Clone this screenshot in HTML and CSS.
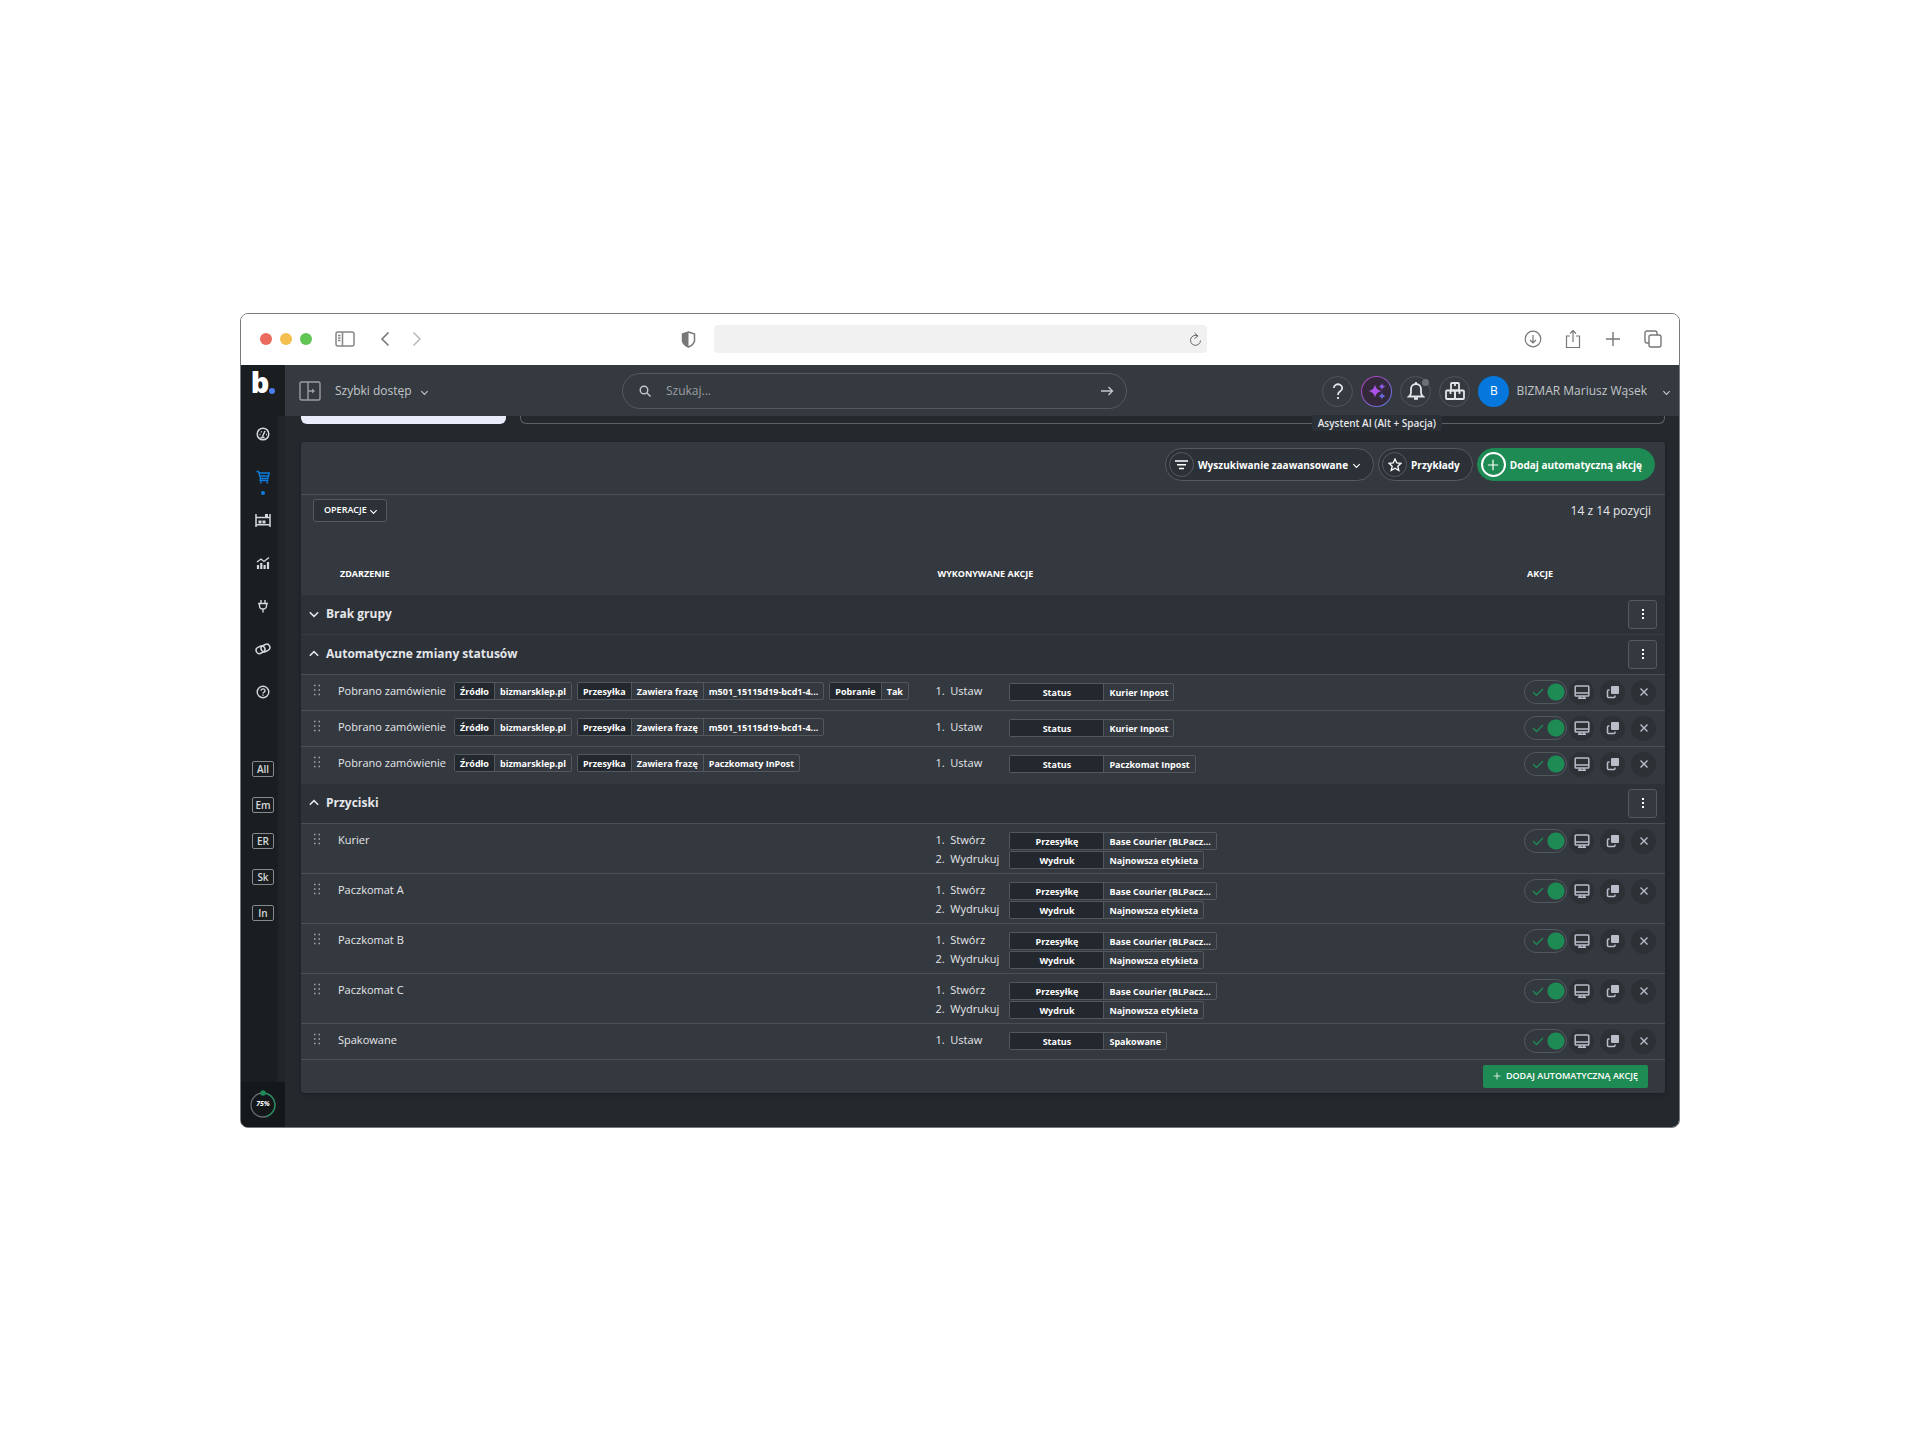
FILE: index.html
```html
<!DOCTYPE html>
<html lang="pl">
<head>
    <meta charset="UTF-8">
    <meta name="viewport" content="width=device-width, initial-scale=1.0">
    <title>Automatyczne akcje</title>
    <link rel="stylesheet" href="styles.css">
</head>
<body>
    <!-- Shared icons -->
    <svg class="sprite" aria-hidden="true">
        <symbol id="chevron" viewBox="0 0 10 10"><path d="M1.5 3.5 5 7l3.500-3.500" fill="none" stroke="currentColor" stroke-width="1.300"/></symbol>
        <symbol id="check" viewBox="0 0 12 10"><path d="M1 5l3.500 3.500L11 2" fill="none" stroke="currentColor" stroke-width="1.300"/></symbol>
        <symbol id="monitor" viewBox="0 0 16 16"><path d="M2 2h12a.8.8 0 0 1 .8.8v8.400a.8.8 0 0 1-.8.8H2a.8.8 0 0 1-.8-.8V2.800A.8.8 0 0 1 2 2zM1 9h14M6 12v2m4-2v2M4 14.300h8" fill="none" stroke="currentColor" stroke-width="1.500"/></symbol>
        <symbol id="copy" viewBox="0 0 14 14"><rect x="5" y="1" width="8" height="8" rx="1" fill="currentColor"/><path d="M3.500 5H2.500a1 1 0 0 0-1 1v5.500a1 1 0 0 0 1 1H8a1 1 0 0 0 1-1v-1" fill="none" stroke="currentColor" stroke-width="1.500"/></symbol>
        <symbol id="cross" viewBox="0 0 10 10"><path d="M1.500 1.500l7 7m0-7l-7 7" stroke="currentColor" stroke-width="1.400"/></symbol>
        <symbol id="plus" viewBox="0 0 14 14"><path d="M7 1v12M1 7h12" stroke="currentColor" stroke-width="1.400"/></symbol>
        <symbol id="dots" viewBox="0 0 4 12"><path d="M2 1v2m0 2v2m0 2v2" stroke="currentColor" stroke-width="2"/></symbol>
        <symbol id="grip" viewBox="0 0 8 12"><path d="M1 1.500h1.500M5.500 1.500H7M1 6h1.500M5.500 6H7M1 10.500h1.500M5.500 10.500H7" stroke="currentColor" stroke-width="1.500"/></symbol>
    </svg>

    <div class="window">
        <header class="chrome">
            <div class="chrome-left">
                <div class="lights"><i class="red"></i><i class="yellow"></i><i class="green"></i></div>
                <svg class="panel-icon" width="20" height="16" viewBox="0 0 20 16" fill="none" stroke="#858585" stroke-width="1.500"><rect x="1" y="1" width="18" height="14" rx="2"/><path d="M7.500 1v14M3 4.500h2.500M3 7h2.500M3 9.500h2.500"/></svg>
                <svg class="back" width="10" height="16" viewBox="0 0 10 16" fill="none" stroke="#777" stroke-width="1.600"><path d="M8.500 1.500 2 8l6.500 6.500"/></svg>
                <svg width="10" height="16" viewBox="0 0 10 16" fill="none" stroke="#bbb" stroke-width="1.600"><path d="M1.500 1.500 8 8l-6.500 6.500"/></svg>
                <svg class="shield" width="15" height="17" viewBox="0 0 15 17"><path d="M7.500 1 13.500 3v7q-1 4-6 6-5-2-6-6V3z" fill="#fff" stroke="#777" stroke-width="1.500"/><path d="M7.500 1 1.500 3v7q1 4 6 6z" fill="#777"/></svg>
            </div>
            <div class="address">
                <svg width="13" height="15" viewBox="0 0 13 15" fill="none" stroke="#666" stroke-width="1"><path d="M9 4a5 5 0 1 0 2.500 4.500M5.500 1 9 4 5.500 6.500"/></svg>
            </div>
            <div class="chrome-right">
                <svg width="18" height="18" viewBox="0 0 18 18" fill="none" stroke="#777" stroke-width="1.200"><circle cx="9" cy="9" r="7.800"/><path d="M9 5v8M6 10l3 3 3-3"/></svg>
                <svg width="18" height="20" viewBox="0 0 18 20" fill="none" stroke="#777" stroke-width="1.200"><path d="M6 7H2.500v11.500h13V7H12M9 13V1.500M6 4.500l3-3 3 3"/></svg>
                <svg width="18" height="18" viewBox="0 0 18 18" fill="none" stroke="#777" stroke-width="1.400"><path d="M9 2v14M2 9h14"/></svg>
                <svg width="18" height="18" viewBox="0 0 18 18" fill="none" stroke="#777" stroke-width="1.400"><rect x="5" y="5" width="12" height="12" rx="2"/><path d="M5 13H3a2 2 0 0 1-2-2V3a2 2 0 0 1 2-2h8a2 2 0 0 1 2 2v2"/></svg>
            </div>
        </header>

        <div class="app">
            <aside class="sidebar">
                <a class="logo" href="#">b<i></i></a>
                <nav class="side-nav">
                    <a href="#" aria-label="Pulpit"><svg width="14" height="14" viewBox="0 0 14 14" fill="none" stroke="currentColor" stroke-width="1.500"><circle cx="7" cy="7" r="5.800"/><path d="M6.500 9.500 9 4M4.500 10.500h4M3.500 7.500h1M5 4.500l.8.8M10 7.500h1"/></svg></a>
                    <a href="#" class="active" aria-label="Zamówienia"><svg width="14" height="14" viewBox="0 0 14 14" fill="none" stroke="currentColor" stroke-width="1.300"><path d="M.5 1.500h2l2 7h7.500l1.300-5.500H3M4 6h8.500M4.500 8.500 4 10.500h8.500"/><path d="M4 12.500h1.500M10.500 12.500H12" stroke-width="2"/></svg></a>
                    <a href="#" aria-label="Magazyn"><svg width="16" height="14" viewBox="0 0 16 14" fill="none" stroke="currentColor" stroke-width="1.500"><path d="M1 1v13M15 1v13M1 4.500h14M1 11.800h14"/><path d="M10 2.500h3M3.500 9h3M7.500 9h3" stroke-width="3"/></svg></a>
                    <a href="#" aria-label="Statystyki"><svg width="14" height="14" viewBox="0 0 14 14" fill="none" stroke="currentColor" stroke-width="1.300"><path d="M1 6l4-3 3 2.500L13 1.500"/><path d="M2 9v4M5.300 7v6M8.600 9v4M12 6v7" stroke-width="2.200"/></svg></a>
                    <a href="#" aria-label="Integracje"><svg width="12" height="14" viewBox="0 0 12 14" fill="none" stroke="currentColor" stroke-width="1.400"><path d="M4 1v3M8 1v3M1 4.500h10M2.500 4.500V7a3.500 3 0 0 0 7 0V4.500M6 10v3.500"/></svg></a>
                    <a href="#" aria-label="Linki"><svg width="16" height="14" viewBox="0 0 16 14" fill="none" stroke="currentColor" stroke-width="1.500"><rect x="1" y="4.500" width="9" height="6.500" rx="3.200" transform="rotate(-25 5.500 7.700)"/><rect x="6" y="2.700" width="9" height="6.500" rx="3.200" transform="rotate(-25 10.500 6)"/></svg></a>
                    <a href="#" aria-label="Pomoc"><svg width="14" height="14" viewBox="0 0 14 14" fill="none" stroke="currentColor" stroke-width="1.400"><circle cx="7" cy="7" r="5.800"/><path d="M5 5.800a2 1.800 0 1 1 2.800 1.500Q7 7.600 7 8.500M7 9.500v1.300"/></svg></a>
                </nav>
                <nav class="shortcuts">
                    <a href="#">All</a>
                    <a href="#">Em</a>
                    <a href="#">ER</a>
                    <a href="#">Sk</a>
                    <a href="#">In</a>
                </nav>
                <div class="progress">
                    <svg width="28" height="30" viewBox="0 0 28 30" fill="none" stroke-width="1.300"><circle cx="14" cy="16" r="12" stroke="#666b6f"/><path d="M14 4a12 12 0 0 1 3 23.600" stroke="#1f8b58"/><circle cx="14" cy="4" r="2.700" fill="#1f8b58"/></svg>
                    <span>75%</span>
                </div>
            </aside>

            <div class="content">
                <div class="topbar">
                    <div class="quick">
                        <svg width="22" height="20" viewBox="0 0 22 20" fill="none" stroke="#9a9fa5" stroke-width="1.400"><rect x="1" y="1" width="20" height="18" rx="1.500"/><path d="M9 1v18M9 10h6"/><path d="M13 7.500 16 10l-3 2.500z" fill="#9a9fa5" stroke="none"/></svg>
                        <button class="quick-button">Szybki dostęp <svg class="chev"><use href="#chevron"/></svg></button>
                    </div>
                    <form class="search">
                        <svg width="12" height="12" viewBox="0 0 12 12" fill="none" stroke="currentColor" stroke-width="1.400"><circle cx="5" cy="5" r="3.800"/><path d="M7.800 7.800 11.500 11.500"/></svg>
                        <input type="text" placeholder="Szukaj..." aria-label="Szukaj">
                        <svg width="14" height="10" viewBox="0 0 14 10" fill="none" stroke="currentColor" stroke-width="1.400"><path d="M1 5h11.500M8.500 1l4 4-4 4"/></svg>
                    </form>
                    <div class="user-bar">
                        <button class="round" aria-label="Pomoc"><svg width="12" height="17" viewBox="0 0 12 17" fill="none" stroke="currentColor" stroke-width="1.800"><path d="M1.800 5a4.200 3.800 0 1 1 6.400 3.300Q6 9.500 6 12M6 14v2"/></svg></button>
                        <button class="round ai" aria-label="Asystent AI">
                            <svg width="18" height="18" viewBox="0 0 18 18"><path d="M7 2.500Q8 8 13.500 9 8 10 7 15.500 6 10 .5 9 6 8 7 2.500z" fill="#ad52e8"/><path d="M14 1q.5 3 3.500 3.500Q14.500 5 14 8q-.5-3-3.500-3.500Q13.500 4 14 1z" fill="#8e5bea"/><path d="M14 10.500q.5 3 3.500 3.500-3 .5-3.500 3.500-.5-3-3.500-3.500 3-.5 3.500-3.500z" fill="#6b6bea"/></svg>
                            <span class="tooltip">Asystent AI (Alt + Spacja)</span>
                        </button>
                        <button class="round bell" aria-label="Powiadomienia"><svg width="18" height="20" viewBox="0 0 18 20" fill="none" stroke="currentColor" stroke-width="1.800"><path d="M2 15.500q2-1.500 2-4V8a5 5 0 0 1 10 0v3.500q0 2.500 2 4zM9 1v2"/><path d="M7 17.500h4" stroke-width="2.400"/></svg><i></i></button>
                        <button class="round" aria-label="Magazyn"><svg width="20" height="18" viewBox="0 0 20 18" fill="none" stroke="currentColor" stroke-width="1.800"><rect x="6" y="1" width="8" height="7.500" rx="1"/><rect x="1" y="8.500" width="9" height="8.500" rx="1"/><rect x="10" y="8.500" width="9" height="8.500" rx="1"/><path d="M10 1v3M5.500 9v3M14.500 9v3"/></svg></button>
                        <span class="avatar">B</span>
                        <button class="user-name">BIZMAR Mariusz Wąsek <svg class="chev"><use href="#chevron"/></svg></button>
                    </div>
                </div>

                <main>
                    <div class="cards">
                        <div class="card-light"></div>
                        <div class="card-outline"></div>
                    </div>

                    <section class="panel">
                        <div class="panel-head">
                            <button class="pill"><span class="pill-icon"><svg width="13" height="10" viewBox="0 0 13 10" stroke="currentColor" stroke-width="1.600"><path d="M0 1h13M2 4.700h9M4 8.500h5"/></svg></span>Wyszukiwanie zaawansowane <svg class="chev"><use href="#chevron"/></svg></button>
                            <button class="pill"><span class="pill-icon"><svg width="14" height="14" viewBox="0 0 14 14" fill="none" stroke="currentColor" stroke-width="1.300"><path d="M7 1l1.800 3.900 4.200.4-3.200 2.900 1 4.300L7 10.200l-3.800 2.300 1-4.300L1 5.300l4.200-.4z"/></svg></span>Przykłady</button>
                            <button class="pill primary"><span class="pill-icon"><svg width="12" height="12"><use href="#plus"/></svg></span>Dodaj automatyczną akcję</button>
                        </div>
                        <div class="toolbar">
                            <button class="operations">OPERACJE <svg class="chev"><use href="#chevron"/></svg></button>
                            <span class="count">14 z 14 pozycji</span>
                        </div>

                        <table class="rules">
                            <colgroup><col class="col-event"><col><col class="col-actions"></colgroup>
                            <thead>
                                <tr><th class="th-event">ZDARZENIE</th><th>WYKONYWANE AKCJE</th><th>AKCJE</th></tr>
                            </thead>
                            <tbody>
                                <tr class="group-row">
                                    <th colspan="2"><button class="fold"><svg class="chev"><use href="#chevron"/></svg>Brak grupy</button></th>
                                    <td><button class="more" aria-label="Więcej"><svg width="4" height="12"><use href="#dots"/></svg></button></td>
                                </tr>
                            </tbody>
                            <tbody>
                                <tr class="group-row">
                                    <th colspan="2"><button class="fold open"><svg class="chev"><use href="#chevron"/></svg>Automatyczne zmiany statusów</button></th>
                                    <td><button class="more" aria-label="Więcej"><svg width="4" height="12"><use href="#dots"/></svg></button></td>
                                </tr>
                                <tr>
                                    <td><div class="event"><svg class="grip"><use href="#grip"/></svg><span class="event-name">Pobrano zamówienie</span>
                                        <span class="tag"><b>Źródło</b><span>bizmarsklep.pl</span></span>
                                        <span class="tag"><b>Przesyłka</b><span>Zawiera frazę</span><span>m501_15115d19-bcd1-4...</span></span>
                                        <span class="tag"><b>Pobranie</b><span>Tak</span></span></div></td>
                                    <td><ol class="steps"><li><span>1.&nbsp; Ustaw</span><span class="tag"><b>Status</b><span>Kurier Inpost</span></span></li></ol></td>
                                    <td><div class="row-actions"><label class="toggle"><input type="checkbox" aria-label="Aktywna" checked><svg><use href="#check"/></svg></label><button aria-label="Podgląd"><svg width="16" height="16"><use href="#monitor"/></svg></button><button aria-label="Kopiuj"><svg width="14" height="14"><use href="#copy"/></svg></button><button aria-label="Usuń"><svg width="10" height="10"><use href="#cross"/></svg></button></div></td>
                                </tr>
                                <tr>
                                    <td><div class="event"><svg class="grip"><use href="#grip"/></svg><span class="event-name">Pobrano zamówienie</span>
                                        <span class="tag"><b>Źródło</b><span>bizmarsklep.pl</span></span>
                                        <span class="tag"><b>Przesyłka</b><span>Zawiera frazę</span><span>m501_15115d19-bcd1-4...</span></span></div></td>
                                    <td><ol class="steps"><li><span>1.&nbsp; Ustaw</span><span class="tag"><b>Status</b><span>Kurier Inpost</span></span></li></ol></td>
                                    <td><div class="row-actions"><label class="toggle"><input type="checkbox" aria-label="Aktywna" checked><svg><use href="#check"/></svg></label><button aria-label="Podgląd"><svg width="16" height="16"><use href="#monitor"/></svg></button><button aria-label="Kopiuj"><svg width="14" height="14"><use href="#copy"/></svg></button><button aria-label="Usuń"><svg width="10" height="10"><use href="#cross"/></svg></button></div></td>
                                </tr>
                                <tr class="group-end">
                                    <td><div class="event"><svg class="grip"><use href="#grip"/></svg><span class="event-name">Pobrano zamówienie</span>
                                        <span class="tag"><b>Źródło</b><span>bizmarsklep.pl</span></span>
                                        <span class="tag"><b>Przesyłka</b><span>Zawiera frazę</span><span>Paczkomaty InPost</span></span></div></td>
                                    <td><ol class="steps"><li><span>1.&nbsp; Ustaw</span><span class="tag"><b>Status</b><span>Paczkomat Inpost</span></span></li></ol></td>
                                    <td><div class="row-actions"><label class="toggle"><input type="checkbox" aria-label="Aktywna" checked><svg><use href="#check"/></svg></label><button aria-label="Podgląd"><svg width="16" height="16"><use href="#monitor"/></svg></button><button aria-label="Kopiuj"><svg width="14" height="14"><use href="#copy"/></svg></button><button aria-label="Usuń"><svg width="10" height="10"><use href="#cross"/></svg></button></div></td>
                                </tr>
                            </tbody>
                            <tbody>
                                <tr class="group-row">
                                    <th colspan="2"><button class="fold open"><svg class="chev"><use href="#chevron"/></svg>Przyciski</button></th>
                                    <td><button class="more" aria-label="Więcej"><svg width="4" height="12"><use href="#dots"/></svg></button></td>
                                </tr>
                                <tr>
                                    <td><div class="event"><svg class="grip"><use href="#grip"/></svg><span class="event-name">Kurier</span></div></td>
                                    <td><ol class="steps"><li><span>1.&nbsp; Stwórz</span><span class="tag"><b>Przesyłkę</b><span>Base Courier (BLPacz...</span></span></li><li><span>2.&nbsp; Wydrukuj</span><span class="tag"><b>Wydruk</b><span>Najnowsza etykieta</span></span></li></ol></td>
                                    <td><div class="row-actions"><label class="toggle"><input type="checkbox" aria-label="Aktywna" checked><svg><use href="#check"/></svg></label><button aria-label="Podgląd"><svg width="16" height="16"><use href="#monitor"/></svg></button><button aria-label="Kopiuj"><svg width="14" height="14"><use href="#copy"/></svg></button><button aria-label="Usuń"><svg width="10" height="10"><use href="#cross"/></svg></button></div></td>
                                </tr>
                                <tr>
                                    <td><div class="event"><svg class="grip"><use href="#grip"/></svg><span class="event-name">Paczkomat A</span></div></td>
                                    <td><ol class="steps"><li><span>1.&nbsp; Stwórz</span><span class="tag"><b>Przesyłkę</b><span>Base Courier (BLPacz...</span></span></li><li><span>2.&nbsp; Wydrukuj</span><span class="tag"><b>Wydruk</b><span>Najnowsza etykieta</span></span></li></ol></td>
                                    <td><div class="row-actions"><label class="toggle"><input type="checkbox" aria-label="Aktywna" checked><svg><use href="#check"/></svg></label><button aria-label="Podgląd"><svg width="16" height="16"><use href="#monitor"/></svg></button><button aria-label="Kopiuj"><svg width="14" height="14"><use href="#copy"/></svg></button><button aria-label="Usuń"><svg width="10" height="10"><use href="#cross"/></svg></button></div></td>
                                </tr>
                                <tr>
                                    <td><div class="event"><svg class="grip"><use href="#grip"/></svg><span class="event-name">Paczkomat B</span></div></td>
                                    <td><ol class="steps"><li><span>1.&nbsp; Stwórz</span><span class="tag"><b>Przesyłkę</b><span>Base Courier (BLPacz...</span></span></li><li><span>2.&nbsp; Wydrukuj</span><span class="tag"><b>Wydruk</b><span>Najnowsza etykieta</span></span></li></ol></td>
                                    <td><div class="row-actions"><label class="toggle"><input type="checkbox" aria-label="Aktywna" checked><svg><use href="#check"/></svg></label><button aria-label="Podgląd"><svg width="16" height="16"><use href="#monitor"/></svg></button><button aria-label="Kopiuj"><svg width="14" height="14"><use href="#copy"/></svg></button><button aria-label="Usuń"><svg width="10" height="10"><use href="#cross"/></svg></button></div></td>
                                </tr>
                                <tr>
                                    <td><div class="event"><svg class="grip"><use href="#grip"/></svg><span class="event-name">Paczkomat C</span></div></td>
                                    <td><ol class="steps"><li><span>1.&nbsp; Stwórz</span><span class="tag"><b>Przesyłkę</b><span>Base Courier (BLPacz...</span></span></li><li><span>2.&nbsp; Wydrukuj</span><span class="tag"><b>Wydruk</b><span>Najnowsza etykieta</span></span></li></ol></td>
                                    <td><div class="row-actions"><label class="toggle"><input type="checkbox" aria-label="Aktywna" checked><svg><use href="#check"/></svg></label><button aria-label="Podgląd"><svg width="16" height="16"><use href="#monitor"/></svg></button><button aria-label="Kopiuj"><svg width="14" height="14"><use href="#copy"/></svg></button><button aria-label="Usuń"><svg width="10" height="10"><use href="#cross"/></svg></button></div></td>
                                </tr>
                                <tr>
                                    <td><div class="event"><svg class="grip"><use href="#grip"/></svg><span class="event-name">Spakowane</span></div></td>
                                    <td><ol class="steps"><li><span>1.&nbsp; Ustaw</span><span class="tag"><b>Status</b><span>Spakowane</span></span></li></ol></td>
                                    <td><div class="row-actions"><label class="toggle"><input type="checkbox" aria-label="Aktywna" checked><svg><use href="#check"/></svg></label><button aria-label="Podgląd"><svg width="16" height="16"><use href="#monitor"/></svg></button><button aria-label="Kopiuj"><svg width="14" height="14"><use href="#copy"/></svg></button><button aria-label="Usuń"><svg width="10" height="10"><use href="#cross"/></svg></button></div></td>
                                </tr>
                            </tbody>
                        </table>
                        <div class="panel-foot">
                            <button class="add"><svg width="8" height="8"><use href="#plus"/></svg>DODAJ AUTOMATYCZNĄ AKCJĘ</button>
                        </div>
                    </section>
                </main>
            </div>
        </div>
    </div>
</body>
</html>
```

FILE: styles.css
```css
* {
    box-sizing: border-box;
}

body {
    display: flex;
    justify-content: center;
    align-items: center;
    min-height: 100vh;
    margin: 0;
    background: #fff;
    color: #e4e6e9;
    font-family: 'Open Sans', 'Noto Sans', sans-serif;
    font-size: 12px;
    line-height: 16px;
}

button {
    padding: 0;
    border: none;
    background: none;
    color: inherit;
    font: inherit;
    cursor: pointer;
}

a {
    color: inherit;
    text-decoration: none;
}

svg {
    display: block;
    flex: none;
}

.sprite {
    display: none;
}

.chev {
    width: 9px;
    height: 9px;
    margin-top: 2px;
}

/* Browser window */
.window {
    width: 75%;
    border: 1px solid #77797b;
    border-radius: 8px;
    overflow: hidden;
}

.chrome {
    display: grid;
    grid-template-columns: 1fr 493px 1fr;
    align-items: center;
    height: 51px;
    background: #fff;
}

.chrome-left {
    display: flex;
    align-items: center;
    padding: 0 18px 0 19px;
}

.lights {
    display: flex;
    gap: 8px;
}

.lights i {
    width: 12px;
    height: 12px;
    border-radius: 50%;
}

.red {
    background: #ec6a5e;
}

.yellow {
    background: #f4bf4f;
}

.green {
    background: #61c554;
}

.panel-icon {
    margin-left: 23px;
}

.back {
    margin: 0 22px 0 25px;
}

.shield {
    margin-left: auto;
}

.address {
    display: flex;
    justify-content: flex-end;
    align-items: center;
    height: 28px;
    padding-right: 5px;
    border-radius: 4px;
    background: #f1f1f1;
}

.chrome-right {
    display: flex;
    justify-content: flex-end;
    align-items: center;
    gap: 22px;
    padding-right: 17px;
}

.app {
    display: flex;
    background: #24292e;
}

/* Sidebar */
.sidebar {
    display: flex;
    flex-direction: column;
    align-items: center;
    width: 44px;
    background: linear-gradient(90deg, #1a1e20 36px, #202527 38px);
    color: #d5d8db;
}

.logo {
    display: flex;
    align-items: flex-end;
    justify-content: center;
    width: 100%;
    height: 51px;
    padding-bottom: 22px;
    background: #1a1e20;
    color: #fff;
    font: 800 29px/24px 'Open Sans', sans-serif;
}

.logo i {
    width: 6px;
    height: 6px;
    border-radius: 50%;
    background: #4a7df0;
}

.side-nav {
    display: flex;
    flex-direction: column;
    gap: 19px;
    padding-top: 6px;
}

.side-nav a {
    position: relative;
    display: flex;
    justify-content: center;
    align-items: center;
    height: 24px;
}

.side-nav .active {
    color: #0d7ce0;
}

.active::after {
    position: absolute;
    bottom: -6px;
    width: 4px;
    height: 4px;
    border-radius: 50%;
    background: #0d7ce0;
    content: '';
}

.shortcuts {
    display: flex;
    flex-direction: column;
    gap: 20px;
    margin-top: 57px;
}

.shortcuts a {
    width: 22px;
    height: 16px;
    border: 1px solid #868a8e;
    border-radius: 2px;
    font-size: 10px;
    font-weight: 600;
    line-height: 14px;
    text-align: center;
}

.progress {
    display: grid;
    place-items: center;
    width: 100%;
    height: 45px;
    margin-top: auto;
    background: #14181a;
    color: #fff;
    font-size: 7px;
    font-style: italic;
    font-weight: 700;
}

.progress > * {
    grid-area: 1 / 1;
}

/* Top bar */
.content {
    flex: 1;
    min-width: 0;
}

.topbar {
    display: flex;
    align-items: center;
    height: 51px;
    padding: 2px 8px 0 0;
    background: #343a3f;
    color: #c3c6ca;
}

.quick {
    display: flex;
    align-items: center;
    gap: 14px;
    width: 337px;
    padding-left: 14px;
}

.quick-button,
.user-name {
    display: flex;
    align-items: center;
    gap: 8px;
}

.search {
    display: flex;
    align-items: center;
    width: 505px;
    height: 36px;
    padding: 0 12px 0 16px;
    border: 1px solid #555a60;
    border-radius: 18px;
}

.search input {
    flex: 1;
    padding: 0 15px;
    border: none;
    outline: none;
    background: none;
    color: inherit;
    font: inherit;
}

.search input::placeholder {
    color: #9a9ea3;
}

.user-bar {
    display: flex;
    align-items: center;
    gap: 8px;
    margin-left: auto;
}

.round,
.avatar {
    position: relative;
    display: flex;
    justify-content: center;
    align-items: center;
    width: 31px;
    height: 31px;
    border: 1px solid #50555a;
    border-radius: 50%;
    color: #e4e6e9;
}

.ai {
    border: 1px solid transparent;
    background: linear-gradient(#33293b, #33293b) padding-box, linear-gradient(135deg, #c03bb8, #5a80e8) border-box;
}

.tooltip {
    position: absolute;
    top: 38px;
    padding: 0 6px;
    border-radius: 2px;
    background: #2b3036;
    font-size: 10px;
    font-weight: 600;
    line-height: 16px;
    white-space: nowrap;
}

.bell i {
    position: absolute;
    top: 2px;
    right: 1px;
    width: 7px;
    height: 7px;
    border-radius: 50%;
    background: #6d7079;
}

.avatar {
    border: none;
    background: #0677dc;
    color: #fff;
}

.user-name {
    gap: 15px;
    margin-left: -1px;
}

/* Main area */
main {
    padding: 0 14px 34px 16px;
}

.cards {
    display: flex;
    gap: 14px;
    height: 8px;
    margin-bottom: 18px;
}

.card-light {
    width: 15%;
    border-radius: 0 0 6px 6px;
    background: #e9edfa;
}

.card-outline {
    flex: 1;
    border: 1px solid #5d6266;
    border-top: none;
    border-radius: 0 0 6px 6px;
}

.panel {
    border-radius: 3px;
    background: #343940;
    box-shadow: 0 1px 4px rgba(0, 0, 0, 0.3);
}

.panel-head {
    display: flex;
    justify-content: flex-end;
    align-items: center;
    gap: 4px;
    height: 53px;
    padding: 0 10px 6px;
    border-bottom: 1px solid #4b5056;
}

.pill {
    display: flex;
    align-items: center;
    gap: 4px;
    height: 33px;
    padding: 0 12px 0 3px;
    border: 1px solid #555a60;
    border-radius: 17px;
    background: #2c3137;
    color: #fff;
    font-size: 10px;
    font-weight: 700;
}

.pill-icon {
    display: flex;
    justify-content: center;
    align-items: center;
    width: 25px;
    height: 25px;
    border: 1px solid #555a60;
    border-radius: 50%;
}

.primary {
    border-color: #1f8b54;
    background: #1f8b54;
}

.primary .pill-icon {
    border: 2px solid #fff;
}

.toolbar {
    display: flex;
    justify-content: space-between;
    align-items: flex-start;
    height: 59px;
    padding: 4px 14px 0 12px;
}

.operations {
    display: flex;
    align-items: center;
    gap: 2px;
    height: 23px;
    padding: 0 8px 0 10px;
    border: 1px solid #555a60;
    border-radius: 3px;
    background: #2c3137;
    color: #fff;
    font-size: 9px;
    font-weight: 600;
}

.count {
    line-height: 24px;
}

/* Rules table */
.rules {
    width: 100%;
    border-spacing: 0;
    table-layout: fixed;
}

.col-event {
    width: 46%;
}

.col-actions {
    width: 141px;
}

.rules th {
    text-align: left;
}

.rules thead th {
    height: 40px;
    padding: 1px 9px 0;
    color: #fff;
    font-size: 9px;
    font-weight: 700;
}

.rules thead .th-event {
    padding-left: 39px;
}

.rules thead th:last-child {
    padding-left: 3px;
}

.rules tbody td {
    height: 36px;
    padding: 7px 0 0;
    border-top: 1px solid #4b5056;
    vertical-align: top;
}

.rules .group-end td {
    height: 37px;
}

.rules .group-row > * {
    height: 40px;
    padding: 0;
    border-top: 1px solid #363b42;
    background: #2d3138;
    vertical-align: middle;
}

.fold {
    display: flex;
    align-items: center;
    gap: 6px;
    padding-left: 7px;
    font-size: 12px;
    font-weight: 700;
}

.fold .chev {
    width: 12px;
    height: 12px;
    margin: 0;
}

.open .chev {
    transform: rotate(180deg);
}

.more {
    display: flex;
    justify-content: center;
    align-items: center;
    width: 29px;
    height: 29px;
    margin-left: auto;
    margin-right: 8px;
    border: 1px solid #555a60;
    border-radius: 3px;
    background: #343940;
    color: #fff;
}

.event {
    display: flex;
    gap: 5px;
    padding-left: 12px;
}

.grip {
    width: 8px;
    height: 12px;
    margin-top: 2px;
    color: #a4a8ac;
}

.event-name {
    margin: 0 3px 0 12px;
    font-size: 11px;
    line-height: 18px;
    white-space: nowrap;
}

.tag {
    display: flex;
    height: 18px;
    border: 1px solid #53585e;
    border-radius: 2px;
    color: #fff;
    font-size: 9px;
    font-weight: 700;
    line-height: 17px;
    white-space: nowrap;
}

.tag > * {
    padding: 0 5px;
}

.tag > * + * {
    border-left: 1px solid #53585e;
}

.tag b {
    background: #23282e;
    font-weight: inherit;
}

.steps {
    margin: 0;
    padding: 1px 0 3px 7px;
    font-size: 11px;
    list-style: none;
}

.steps li {
    display: grid;
    grid-template-columns: 74px 1fr;
    justify-items: start;
    height: 19px;
    line-height: 16px;
}

.steps b {
    width: 93px;
    text-align: center;
}

.row-actions {
    display: flex;
    align-items: center;
    gap: 6px;
    margin-top: -2px;
}

.row-actions button {
    display: flex;
    justify-content: center;
    align-items: center;
    width: 25px;
    height: 25px;
    border-radius: 50%;
    background: #2d3136;
    color: #b9bdc9;
}

.toggle {
    display: grid;
    align-items: center;
    margin-right: -4px;
}

.toggle > * {
    grid-area: 1 / 1;
}

.toggle input {
    width: 43px;
    height: 24px;
    margin: 0;
    border: 1px solid #53585e;
    border-radius: 12px;
    appearance: none;
}

.toggle input:checked {
    background: radial-gradient(circle at 31px 50%, #1f8b54 8px, transparent 9px);
}

.toggle svg {
    width: 12px;
    height: 10px;
    margin-left: 8px;
    color: #1f8b54;
    pointer-events: none;
}

.panel-foot {
    display: flex;
    justify-content: flex-end;
    padding: 5px 17px 5px;
    border-top: 1px solid #4b5056;
}

.add {
    display: flex;
    align-items: center;
    gap: 5px;
    height: 23px;
    padding: 0 10px;
    border-radius: 2px;
    background: #1f8b54;
    color: #fff;
    font-size: 9px;
    font-weight: 600;
}
```
